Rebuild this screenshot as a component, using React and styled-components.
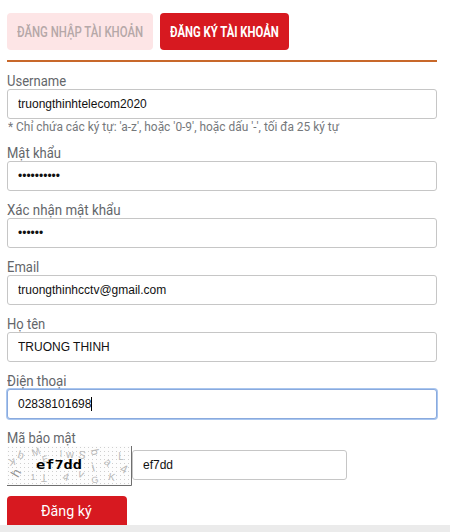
import React, { useState } from 'react';
import styled, { createGlobalStyle, css } from 'styled-components';

const GlobalStyle = createGlobalStyle`
  body {
    margin: 0;
    background: #fff;
  }
  * {
    box-sizing: border-box;
  }
`;
const Page = styled.div`
  display: flex;
  flex-direction: column;
  height: 532px;
  padding: 13px 13px 0 7px;
  overflow: hidden;
  font-family: Roboto, 'Liberation Sans', sans-serif;
`;
const Tabs = styled.div`
  display: flex;
  gap: 7px;
  height: 49px;
  flex: none;
  border-bottom: 2px solid #c8682a;
`;
const Tab = styled.button`
  width: ${props => props.$width}px;
  height: 37px;
  padding: 0 0 0 10px;
  border: 0;
  border-radius: 4px;
  text-align: left;
  font: ${props => (props.$active ? 700 : 500)} 15.5px/38px Roboto, sans-serif;
  background: ${props => (props.$active ? '#d71920' : '#fde5e6')};
  color: ${props => (props.$active ? '#fff' : '#b5a8a8')};
`;
const Condensed = styled.span`
  display: inline-block;
  white-space: pre;
  transform: scaleX(${props => props.$x});
  transform-origin: left center;
`;
const Form = styled.form`
  display: flex;
  flex-direction: column;
  padding-top: 12px;
`;
const Group = styled.div`
  height: ${props => props.$height || 57}px;
  flex: none;
`;
const Label = styled.label`
  display: block;
  height: 15px;
  line-height: 15px;
  font-size: 14px;
  color: #63666a;
`;
const field = css`
  width: 100%;
  height: 30px;
  padding: 0 10px;
  border: 1px solid #c6c6c6;
  border-radius: 3px;
  background: #fff;
  color: #111;
  font: 12px/28px 'Liberation Sans', Arial, sans-serif;
  outline: none;
`;
const Input = styled.input`
  display: block;
  ${field}
`;
const FocusedField = styled.div`
  display: flex;
  align-items: center;
  ${field}
  border-color: #8aaade;
  box-shadow: 0 0 0 1px #a9c6ef;
`;
const Caret = styled.span`
  width: 1px;
  height: 14px;
  background: #000;
`;
const Hint = styled.div`
  height: 16px;
  padding-left: 1px;
  line-height: 17px;
  font-size: 12px;
  color: #75787b;
`;
const CaptchaRow = styled.div`
  display: flex;
  align-items: flex-start;
  height: 40px;
`;
const CodeInput = styled(Input)`
  width: 215px;
  margin-top: 4px;
`;
const Submit = styled.button`
  flex: none;
  width: 120px;
  height: 29px;
  margin-top: 10px;
  padding: 0 0 0 34px;
  border: 0;
  border-radius: 4px 4px 0 0;
  text-align: left;
  background: #d71920;
  color: #fff;
  font: 15px/31px Roboto, sans-serif;
`;
const Footer = styled.div`
  flex: none;
  height: 7px;
  margin: auto -13px 0 -7px;
  background: #ebebeb;
`;

const noise = [
  ['K', 5, 16, 10, 170],
  ['b', 14, 9, 11, 15],
  ['M', 29, 6, 10, -20],
  ['w', 63, 8, 11, 0],
  ['S', 75, 9, 11, 10],
  ['b', 88, 6, 11, 80],
  ['L', 114, 11, 10, 0],
  ['h', 9, 27, 13, -60],
  ['1', 26, 31, 9, 0],
  ['T', 37, 31, 10, 180],
  ['E', 38, 13, 9, -15],
  ['4', 59, 31, 11, 15],
  ['v', 74, 28, 11, 20],
  ['i', 86, 21, 13, -15],
  ['a', 101, 16, 11, 40],
  ['K', 105, 31, 10, 10],
  ['4', 117, 23, 12, 25],
  ['G', 88, 34, 9, -10],
  ['l', 54, 8, 9, 0],
];

function Captcha({ code }) {
  return (
    <svg width="125" height="41" viewBox="0 0 125 41">
      <defs>
        <pattern id="dots" width="4" height="4" patternUnits="userSpaceOnUse">
          <rect x="1" y="1" width="1" height="1" fill="#cfcfcf" />
        </pattern>
      </defs>
      <rect width="124" height="40" fill="#fdfdfd" />
      <rect width="124" height="40" fill="url(#dots)" />
      {noise.map(([char, x, y, size, angle], i) => (
        <text
          key={i}
          x={x}
          y={y}
          fontSize={size}
          fill={i === 7 ? '#929292' : '#b9b9b9'}
          fontFamily="Liberation Sans"
          textAnchor="middle"
          dy="0.34em"
          transform={`rotate(${angle} ${x} ${y})`}
        >
          {char}
        </text>
      ))}
      <text
        x="29"
        y="23"
        fontFamily="DejaVu Sans Mono"
        fontWeight="700"
        fontSize="13"
        textLength="46"
        lengthAdjust="spacingAndGlyphs"
      >
        {code}
      </text>
      <path d="M0 39.5H124.5V0" fill="none" stroke="#6f6f6f" />
    </svg>
  );
}

function Field({ label, squeeze = 0.93, type = 'text', value, height, children }) {
  const [text, setText] = useState(value);

  return (
    <Group $height={height}>
      <Label>
        <Condensed $x={squeeze}>{label}</Condensed>
      </Label>
      <Input
        type={type}
        value={text}
        autoComplete="off"
        onChange={e => setText(e.target.value)}
      />
      {children}
    </Group>
  );
}

function App() {
  const [code, setCode] = useState('ef7dd');

  return (
    <>
      <GlobalStyle />
      <Page>
        <Tabs>
          <Tab $width={146}>
            <Condensed $x={0.735}>ĐĂNG NHẬP TÀI KHOẢN</Condensed>
          </Tab>
          <Tab $width={129} $active>
            <Condensed $x={0.73}>ĐĂNG KÝ TÀI KHOẢN</Condensed>
          </Tab>
        </Tabs>
        <Form onSubmit={e => e.preventDefault()}>
          <Field label="Username" value="truongthinhtelecom2020" height={72}>
            <Hint>
              <Condensed $x={0.992}>
                {"* Chỉ chứa các ký tự: 'a-z', hoặc '0-9', hoặc dấu '-', tối đa 25 ký tự"}
              </Condensed>
            </Hint>
          </Field>
          <Field label="Mật khẩu" type="password" value="truong2020" />
          <Field label="Xác nhận mật khẩu" squeeze={0.95} type="password" value="truong" />
          <Field label="Email" value="truongthinhcctv@gmail.com" />
          <Field label="Họ tên" value="TRUONG THINH" />
          <Group>
            <Label>
              <Condensed $x={0.95}>Điện thoại</Condensed>
            </Label>
            <FocusedField>
              02838101698
              <Caret />
            </FocusedField>
          </Group>
          <Label>
            <Condensed $x={0.92}>Mã bảo mật</Condensed>
          </Label>
          <CaptchaRow>
            <Captcha code="ef7dd" />
            <CodeInput value={code} onChange={e => setCode(e.target.value)} />
          </CaptchaRow>
          <Submit>
            <Condensed $x={0.95}>Đăng ký</Condensed>
          </Submit>
        </Form>
        <Footer />
      </Page>
    </>
  );
}

export default App;
